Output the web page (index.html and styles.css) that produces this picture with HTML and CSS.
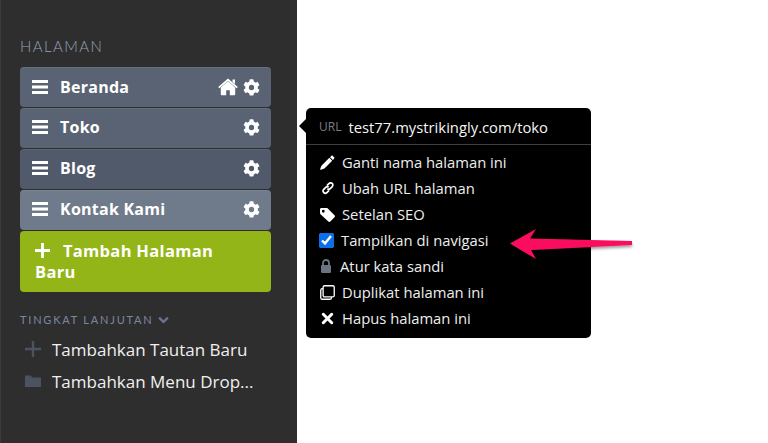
FILE: index.html
```html
<!DOCTYPE html>
<html lang="id">
<head>
<meta charset="utf-8">
<title>Halaman</title>
<link rel="stylesheet" href="styles.css">
</head>
<body>
<svg class="defs" width="0" height="0">
  <symbol id="gear" viewBox="0 0 512 512"><path fill="#fff" fill-rule="evenodd" d="M487 316l-42-25c4-23 4-47 0-70l42-25c5-3 7-9 5-14-11-35-30-67-54-93-4-4-10-5-15-2l-42 25c-18-16-39-28-61-35V27c0-6-4-10-9-12-36-8-74-8-108 0-5 2-9 6-9 12v48c-22 8-43 20-61 35L91 85c-5-3-11-2-15 2-24 26-43 58-54 93-2 5 0 11 5 14l42 25c-4 23-4 47 0 70l-42 25c-5 3-7 9-5 14 11 35 30 67 54 93 4 4 10 5 15 2l42-25c18 16 39 28 61 35v48c0 6 4 10 9 12 36 8 74 8 108 0 5-2 9-6 9-12v-48c22-8 43-20 61-35l42 25c5 3 11 2 15-2 24-26 43-58 54-93 2-5 0-11-5-14zM256 336a80 80 0 1 1 0-160 80 80 0 0 1 0 160z"/></symbol>
  <symbol id="bars" viewBox="0 0 16 14"><path fill="#fff" d="M0 0h16v3H0zM0 5.500h16v3H0zM0 11h16v3H0z"/></symbol>
</svg>

<aside class="sidebar">
  <h2 class="heading">HALAMAN</h2>
  <ul class="pages">
    <li class="page page-a">
      <svg class="bars"><use href="#bars"/></svg>
      <span class="page-name">Beranda</span>
      <svg class="home" viewBox="0 0 20 18"><path fill="#fff" d="M10 3.200 2.800 9.400v7c0 .5.300.8.800.8h4.600v-5h3.600v5h4.600c.5 0 .8-.3.800-.8v-7z"/><path fill="none" stroke="#fff" stroke-width="1.800" d="M.8 9.600 10 1.800l9.200 7.800"/><path fill="#fff" d="M14.500 1.500h2.500v4.500l-2.500-2z"/></svg>
      <svg class="gear"><use href="#gear"/></svg>
    </li>
    <li class="page page-a page-up">
      <svg class="bars"><use href="#bars"/></svg>
      <span class="page-name">Toko</span>
      <svg class="gear"><use href="#gear"/></svg>
    </li>
    <li class="page page-b page-up">
      <svg class="bars"><use href="#bars"/></svg>
      <span class="page-name">Blog</span>
      <svg class="gear"><use href="#gear"/></svg>
    </li>
    <li class="page page-c page-up">
      <svg class="bars"><use href="#bars"/></svg>
      <span class="page-name">Kontak Kami</span>
      <svg class="gear"><use href="#gear"/></svg>
    </li>
  </ul>
  <button class="add-page" type="button"><svg class="add-plus" viewBox="0 0 16 16"><path fill="#fff" d="M6.500 0h3v6.500H16v3H9.500V16h-3V9.500H0v-3h6.500z"/></svg>Tambah Halaman Baru</button>
  <div class="advanced">TINGKAT LANJUTAN <svg class="chev" viewBox="0 0 12 8"><path fill="none" stroke="#67748c" stroke-width="2.600" d="M1.200 1.500 6 6l4.800-4.500"/></svg></div>
  <div class="extra">
    <svg class="extra-icon" viewBox="0 0 16 16"><path fill="#4b5260" d="M6.800 0h2.400v6.800H16v2.400H9.200V16H6.800V9.200H0V6.800h6.800z"/></svg>
    <span>Tambahkan Tautan Baru</span>
  </div>
  <div class="extra">
    <svg class="extra-icon" viewBox="0 0 16 16"><path fill="#4b5260" d="M0 3.500c0-.5.300-1 1-1h4.500l2 2H15c.6 0 1 .4 1 1V14H0z"/></svg>
    <span>Tambahkan Menu Drop...</span>
  </div>
</aside>

<div class="popover">
  <div class="url-row"><span class="url-label">URL</span><span class="url-value">test77.mystrikingly.com/toko</span></div>
  <ul class="menu">
    <li class="item"><svg class="ico" viewBox="0 0 16 16"><path fill="#fff" d="M12 1c.5-.5 1.200-.5 1.700 0l1.300 1.300c.5.500.5 1.200 0 1.700l-1.300 1.300L10.700 2.300zM10 3 13 6 5 14.200c-.8.500-2.800 1.300-4.300 1.600-.5 0-.6-.2-.5-.6.3-1.400 1-3.300 1.600-4.100z"/></svg>Ganti nama halaman ini</li>
    <li class="item"><svg class="ico ico-small" viewBox="0 0 16 16"><path fill="none" stroke="#fff" stroke-width="2" d="M6.800 5.200 9 3c1.200-1.200 2.800-1.200 3.800-.2s1 2.600-.2 3.800L10.600 8.600c-1 1-2.400 1-3.300.2M9.200 10.800 7 13c-1.200 1.200-2.800 1.200-3.800.2s-1-2.600.2-3.800l2-2c1-1 2.400-1 3.300-.2"/></svg>Ubah URL halaman</li>
    <li class="item"><svg class="ico" viewBox="0 0 16 16"><path fill="#fff" fill-rule="evenodd" d="M0 2.500C0 1.700.7 1 1.500 1H7c.4 0 .8.200 1 .4l7.500 7.500c.6.600.6 1.500 0 2.100l-4.500 4.500c-.6.600-1.500.6-2.100 0L.5 7.600C.2 7.300 0 7 0 6.500zM3.500 3a1.500 1.500 0 1 0 0 3 1.500 1.500 0 0 0 0-3z"/></svg>Setelan SEO</li>
    <li class="item"><input class="check" type="checkbox" checked>Tampilkan di navigasi</li>
    <li class="item"><svg class="ico-lock" viewBox="0 0 12 14"><path fill="none" stroke="#6c7482" stroke-width="1.800" d="M3 6V4a3 3 0 0 1 6 0v2"/><rect x="1" y="6" width="10" height="8" rx="1.200" fill="#6c7482"/></svg>Atur kata sandi</li>
    <li class="item"><svg class="ico" viewBox="0 0 16 16"><path fill="none" stroke="#fff" stroke-width="1.400" d="M5 .8h8.500c.9 0 1.700.8 1.700 1.700V11c0 .9-.8 1.700-1.700 1.700H5c-.9 0-1.700-.8-1.700-1.700V2.500C3.300 1.600 4.100.8 5 .8z"/><path fill="none" stroke="#fff" stroke-width="1.400" d="M3.300 3.800h-.8C1.600 3.800.8 4.600.8 5.500v8c0 .9.800 1.700 1.700 1.700h8c.9 0 1.700-.8 1.700-1.700v-.8"/></svg>Duplikat halaman ini</li>
    <li class="item"><svg class="ico" viewBox="0 0 16 16"><path fill="none" stroke="#fff" stroke-width="3.200" stroke-linecap="round" d="M3.500 3.500l9 9M12.500 3.500l-9 9"/></svg>Hapus halaman ini</li>
  </ul>
</div>

<svg class="arrow" viewBox="0 0 130 44">
  <defs><filter id="s" x="-10%" y="-20%" width="120%" height="150%"><feDropShadow dx="0" dy="2" stdDeviation="1.500" flood-color="#000" flood-opacity=".4"/></filter></defs>
  <path fill="#fa0f5f" filter="url(#s)" d="M1 17.500 27 3 21 12.500 123 15v4L22 24l5 9z"/>
</svg>
</body>
</html>
```
FILE: styles.css
```css
* { box-sizing: border-box; }
html, body { margin: 0; padding: 0; }
body {
  width: 768px;
  height: 443px;
  overflow: hidden;
  background: #fff;
  font-family: "Open Sans", sans-serif;
  position: relative;
}
.defs { position: absolute; }
.sidebar {
  width: 297px;
  height: 443px;
  background: #2e2e2e;
  border-left: 1px solid #3c3c3c;
  padding: 38px 26px 0 19px;
  color: #fff;
}
.heading {
  margin: 0 0 12px;
  font: 300 15px/17px Lato, sans-serif;
  letter-spacing: 1.400px;
  color: #97a2b5;
}
.pages { list-style: none; margin: 0; padding: 0; }
.page {
  height: 40px;
  margin-bottom: 1px;
  border-radius: 4px;
  display: flex;
  align-items: center;
  padding: 0 11px 0 12px;
  box-shadow: inset 0 1px 0 rgba(255,255,255,.08);
}
.page-up { padding-bottom: 2px; }
.page-a { background: #5a6374; }
.page-b { background: #515a6b; }
.page-c { background: #6f7b8a; }
.page-name {
  font-weight: 700;
  font-size: 16px;
  letter-spacing: .25px;
  line-height: 22px;
  margin-left: 12px;
  flex: 1;
}
.bars { width: 16px; height: 14px; flex: none; }
.gear { width: 17px; height: 17px; flex: none; }
.home { width: 20px; height: 18px; flex: none; margin-right: 5px; }
.add-page {
  display: block;
  width: 251px;
  height: 61px;
  margin-top: 1px;
  padding: 0 30px 2px 15px;
  border: 0;
  border-radius: 4px;
  background: #94b518;
  color: #fff;
  font: 700 16.500px/21px "Open Sans", sans-serif;
  letter-spacing: .3px;
  text-align: left;
}
.add-plus { width: 15px; height: 15px; margin-right: 13px; vertical-align: -1px; }
.advanced {
  margin-top: 21px;
  font: 400 11px/14px Lato, sans-serif;
  letter-spacing: 1.800px;
  color: #7b88a0;
  height: 14px;
}
.chev { width: 11px; height: 8px; }
.extra {
  height: 32px;
  display: flex;
  align-items: center;
  font-size: 17px;
  color: #f0f0f0;
}
.advanced + .extra { margin-top: 6px; }
.extra-icon { width: 16px; height: 16px; margin: 0 11px 0 5px; flex: none; }
.popover {
  position: absolute;
  left: 306px;
  top: 108px;
  width: 285px;
  height: 230px;
  background: #000;
  border-radius: 5px;
  color: #eee;
  font-size: 14.800px;
}
.popover::before {
  content: "";
  position: absolute;
  left: -7px;
  top: 11px;
  border: 7px solid transparent;
  border-left: 0;
  border-right-color: #000;
}
.url-row {
  height: 37px;
  border-bottom: 1px solid #3f3f3f;
  display: flex;
  align-items: center;
  padding: 1px 0 0 13px;
}
.url-label { font-size: 12px; color: #7a7f88; margin-right: 7px; }
.url-value { font-size: 14.800px; color: #f5f5f5; }
.menu { list-style: none; margin: 4px 0 0; padding: 0; }
.item {
  height: 26px;
  display: flex;
  align-items: center;
  padding-left: 14px;
  line-height: 20px;
}
.ico { width: 15px; height: 15px; margin-right: 7px; flex: none; }
.ico-small { width: 14px; height: 14px; margin-left: 1px; }
.ico-lock { width: 12px; height: 14px; margin: 0 8px 0 0; flex: none; }
.check {
  width: 13px;
  height: 13px;
  margin: 0 8px 0 0;
  accent-color: #0a6fe8;
  transform: scale(1.150);
}
.arrow {
  position: absolute;
  left: 509px;
  top: 226px;
  width: 130px;
  height: 44px;
}
```
